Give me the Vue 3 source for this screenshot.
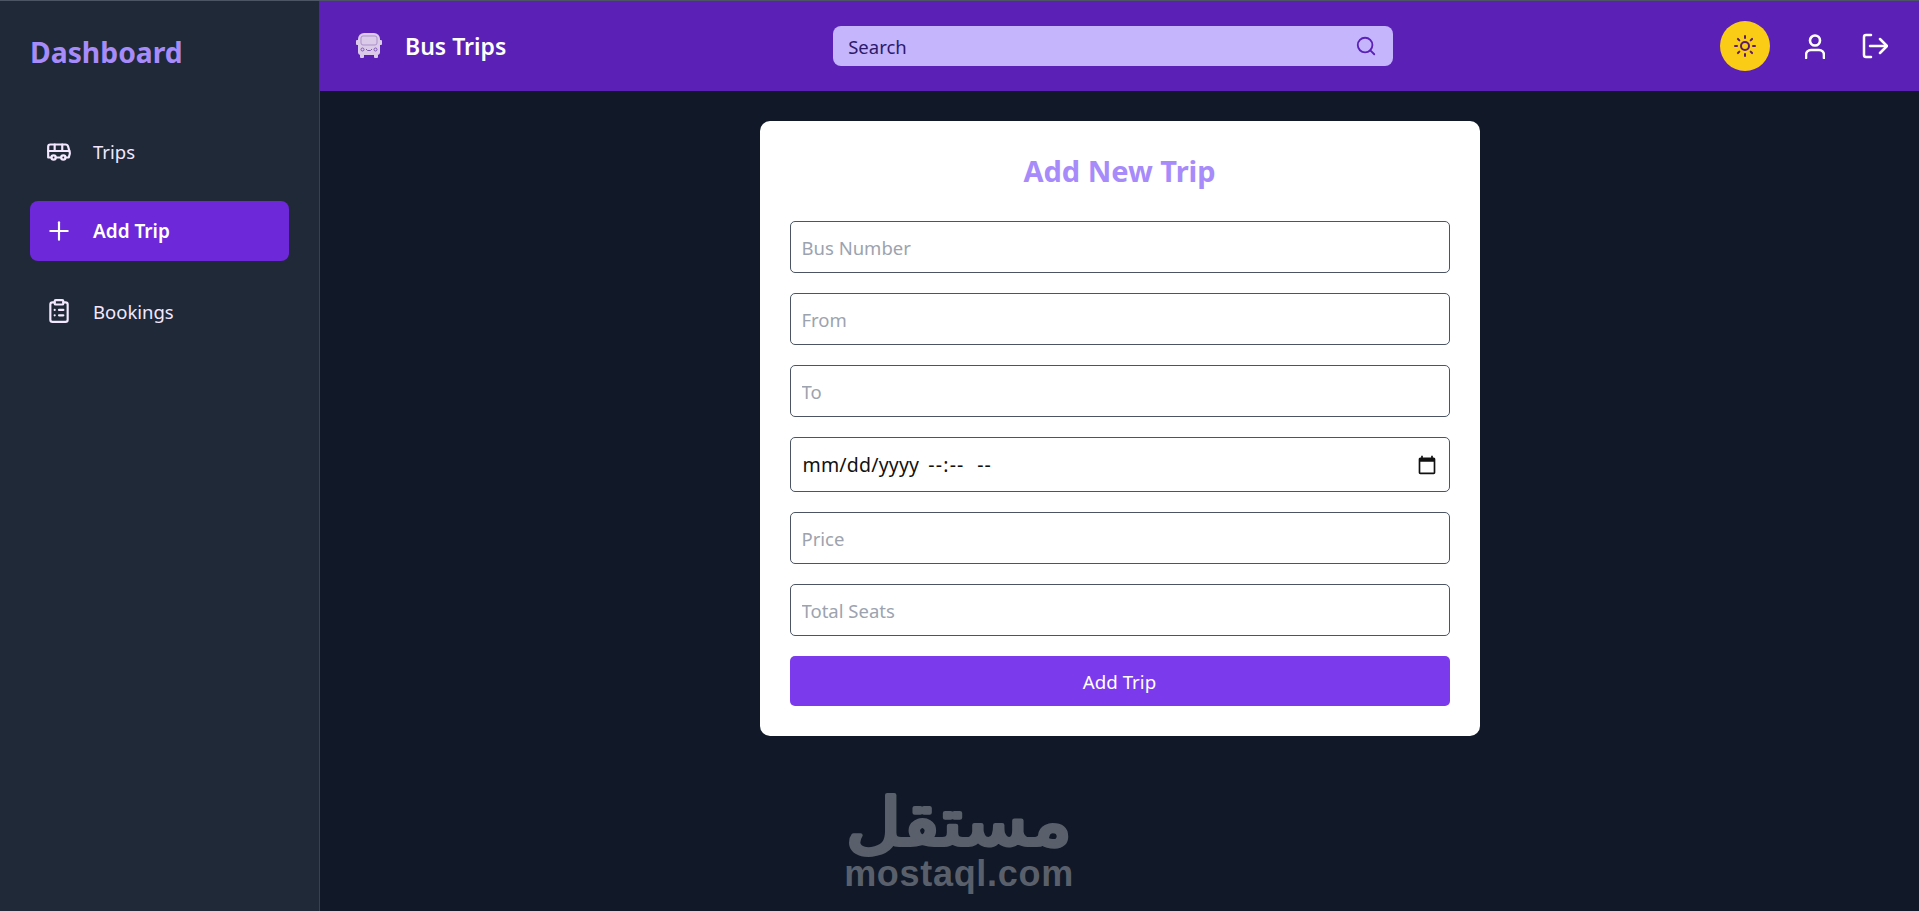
<template>
  <div class="app">
    <aside class="sidebar">
      <h1 class="brand">Dashboard</h1>
      <nav class="menu">
        <a v-for="item in menu" :key="item.label" class="menu-item" :class="{ active: item.active }">
          <svg v-if="item.icon === 'bus'" class="menu-icon" viewBox="0 0 24 24" fill="none" stroke="currentColor" stroke-width="2" stroke-linecap="round" stroke-linejoin="round">
            <path d="M8 6v6" /><path d="M15 6v6" /><path d="M2 12h19.6" />
            <path d="M18 18h3s.5-1.7.8-2.8c.1-.4.2-.8.2-1.2 0-.4-.1-.8-.2-1.2l-1.4-5C20.1 6.8 19.1 6 18 6H4a2 2 0 0 0-2 2v10h3" />
            <circle cx="7" cy="18" r="2" /><path d="M9 18h5" /><circle cx="16" cy="18" r="2" />
          </svg>
          <svg v-else-if="item.icon === 'plus'" class="menu-icon" viewBox="0 0 24 24" fill="none" stroke="currentColor" stroke-width="2" stroke-linecap="round">
            <path d="M12 4v16" /><path d="M4 12h16" />
          </svg>
          <svg v-else class="menu-icon" viewBox="0 0 24 24" fill="none" stroke="currentColor" stroke-width="2" stroke-linecap="round" stroke-linejoin="round">
            <rect x="8" y="2" width="8" height="4" rx="1" />
            <path d="M16 4h2a2 2 0 0 1 2 2v14a2 2 0 0 1-2 2H6a2 2 0 0 1-2-2V6a2 2 0 0 1 2-2h2" />
            <path d="M12 11h4" /><path d="M12 16h4" /><path d="M8 11h.01" /><path d="M8 16h.01" />
          </svg>
          <span>{{ item.label }}</span>
        </a>
      </nav>
    </aside>

    <div class="content">
      <header class="topbar">
        <div class="title-group">
          <svg class="title-icon" viewBox="0 0 26 25">
            <path fill="#dccbe8" d="M8 0h10a6 6 0 0 1 6 6v13a3 3 0 0 1-3 3H5a3 3 0 0 1-3-3V6a6 6 0 0 1 6-6z" />
            <rect fill="#dccbe8" x="0" y="7" width="3" height="5" rx="1" />
            <rect fill="#dccbe8" x="23" y="7" width="3" height="5" rx="1" />
            <rect fill="#dccbe8" x="4" y="21" width="4" height="4" rx="1" />
            <rect fill="#dccbe8" x="18" y="21" width="4" height="4" rx="1" />
            <rect x="5" y="3" width="16" height="9" rx="2" fill="none" stroke="#a98fca" stroke-width="1" />
            <circle cx="6.500" cy="16.500" r="1.500" fill="none" stroke="#7d58b2" stroke-width="1" />
            <circle cx="19.500" cy="16.500" r="1.500" fill="none" stroke="#7d58b2" stroke-width="1" />
            <path d="M10 16l1.500 1.500h3L16 16" fill="none" stroke="#7d58b2" stroke-width="1" />
          </svg>
          <span class="title">Bus Trips</span>
        </div>

        <div class="search">
          <input class="search-input" type="text" placeholder="Search" />
          <svg class="search-icon" viewBox="0 0 24 24" fill="none" stroke="currentColor" stroke-width="2" stroke-linecap="round">
            <circle cx="11" cy="11" r="8" /><path d="m21 21-4.300-4.300" />
          </svg>
        </div>

        <div class="actions">
          <button class="theme-button" type="button">
            <svg viewBox="0 0 24 24" fill="none" stroke="currentColor" stroke-width="2" stroke-linecap="round">
              <circle cx="12" cy="12" r="4" />
              <path d="M12 2v2" /><path d="M12 20v2" /><path d="m4.930 4.930 1.410 1.410" /><path d="m17.660 17.660 1.410 1.410" />
              <path d="M2 12h2" /><path d="M20 12h2" /><path d="m6.340 17.660-1.410 1.410" /><path d="m19.070 4.930-1.410 1.410" />
            </svg>
          </button>
          <svg class="user-icon" viewBox="0 0 20 25" fill="none" stroke="currentColor" stroke-width="2.600" stroke-linecap="round">
            <circle cx="10" cy="6.500" r="5" /><path d="M1 24v-3a5 5 0 0 1 5-5h8a5 5 0 0 1 5 5v3" />
          </svg>
          <svg class="logout-icon" viewBox="0 0 26 26" fill="none" stroke="currentColor" stroke-width="2.500" stroke-linecap="round" stroke-linejoin="round">
            <path d="M9 2H4a2 2 0 0 0-2 2v18a2 2 0 0 0 2 2h5" /><path d="M8 13h16" /><path d="m18 6 7 7-7 7" />
          </svg>
        </div>
      </header>

      <main class="page">
        <form class="card" @submit.prevent>
          <h2 class="card-title">Add New Trip</h2>
          <input class="field" type="text" placeholder="Bus Number" />
          <input class="field" type="text" placeholder="From" />
          <input class="field" type="text" placeholder="To" />
          <div class="field date">
            <span>mm/dd/yyyy</span>
            <span class="date-time">--:--&nbsp;&nbsp;--</span>
            <svg class="calendar" viewBox="0 0 24 24" fill="currentColor">
              <path d="M20 3h-1V1h-2v2H7V1H5v2H4c-1.100 0-2 .9-2 2v16c0 1.100.9 2 2 2h16c1.100 0 2-.9 2-2V5c0-1.100-.9-2-2-2zm0 18H4V8h16v13z" />
            </svg>
          </div>
          <input class="field" type="number" placeholder="Price" />
          <input class="field" type="number" placeholder="Total Seats" />
          <button class="submit" type="submit">Add Trip</button>
        </form>
      </main>
    </div>

    <div class="watermark">
      <svg class="mark-ar" viewBox="0 0 230 72">
        <text x="2" y="64" textLength="226" lengthAdjust="spacingAndGlyphs">مستقل</text>
      </svg>
      <span class="mark-en">mostaql.com</span>
    </div>
  </div>
</template>

<script setup>
const menu = [
  { label: "Trips", icon: "bus" },
  { label: "Add Trip", icon: "plus", active: true },
  { label: "Bookings", icon: "list" }
];
</script>

<style>
html, body {
  margin: 0;
  background: #111827;
  overflow: hidden;
}
</style>

<style scoped>
.app {
  display: flex;
  height: 911px;
  box-sizing: border-box;
  border-top: 1px solid #4b5563;
  font-family: "Noto Sans", "Open Sans", sans-serif;
  background: #111827;
}

.sidebar {
  width: 320px;
  box-sizing: border-box;
  flex-shrink: 0;
  padding: 31px 30px;
  background: #1f2937;
  border-right: 1px solid #374151;
}

.brand {
  margin: 0 0 49px;
  font-size: 28.300px;
  line-height: 40px;
  font-weight: 700;
  color: #a78bfa;
}

.menu {
  display: flex;
  flex-direction: column;
  gap: 20px;
}

.menu-item {
  display: flex;
  align-items: center;
  gap: 21px;
  height: 60px;
  padding: 0 16px;
  border-radius: 8px;
  font-size: 18.500px;
  color: #f3e8ff;
}

.menu-item.active {
  background: #6d28d9;
  color: #fff;
  font-weight: 600;
  font-size: 19px;
}

.menu-icon {
  width: 26px;
  height: 26px;
  flex-shrink: 0;
}

.content {
  flex: 1;
  min-width: 0;
  display: flex;
  flex-direction: column;
}

.topbar {
  height: 90px;
  box-sizing: border-box;
  flex-shrink: 0;
  display: flex;
  align-items: center;
  justify-content: space-between;
  padding: 0 31px 0 36px;
  background: #5b21b6;
}

.title-group {
  display: flex;
  align-items: center;
  gap: 23px;
}

.title-icon {
  width: 26px;
  height: 25px;
  margin-top: -2px;
}

.title {
  font-size: 23px;
  font-weight: 600;
  color: #fff;
}

.search {
  width: 560px;
  height: 40px;
  box-sizing: border-box;
  display: flex;
  align-items: center;
  padding: 0 16px 0 15px;
  border-radius: 8px;
  background: #c4b5fd;
}

.search-input {
  flex: 1;
  min-width: 0;
  border: none;
  outline: none;
  background: transparent;
  font: inherit;
  font-size: 18.500px;
  color: #1e1b4b;
  padding: 0;
}

.search-input::placeholder {
  color: #2e1a6b;
  opacity: 1;
}

.search-icon {
  width: 22px;
  height: 22px;
  color: #5b21b6;
}

.actions {
  display: flex;
  align-items: center;
}

.theme-button {
  width: 50px;
  height: 50px;
  padding: 13px;
  border: none;
  border-radius: 50%;
  background: #facc15;
  color: #5b1a6e;
  margin-right: 35px;
}

.theme-button svg {
  display: block;
  width: 24px;
  height: 24px;
}

.user-icon {
  width: 20px;
  height: 25px;
  color: #fff;
  margin-right: 37px;
}

.logout-icon {
  width: 26px;
  height: 26px;
  color: #fff;
}

.page {
  display: flex;
  justify-content: center;
  padding-top: 30px;
}

.card {
  width: 720px;
  height: 615px;
  box-sizing: border-box;
  display: flex;
  flex-direction: column;
  gap: 20px;
  padding: 30px;
  border-radius: 10px;
  background: #fff;
}

.card-title {
  margin: 0 0 10px;
  text-align: center;
  font-size: 29px;
  line-height: 40px;
  font-weight: 700;
  color: #a78bfa;
}

.field {
  width: 100%;
  height: 52px;
  box-sizing: border-box;
  padding: 0 11px;
  border: 1px solid #4b5563;
  border-radius: 5px;
  background: #fff;
  font: inherit;
  font-size: 18.500px;
  color: #111;
  outline: none;
}

.field.date {
  height: 55px;
  display: flex;
  align-items: center;
  gap: 9px;
  padding-left: 12px;
  font-size: 19.500px;
  letter-spacing: 0.200px;
}

.date-time {
  flex: 1;
  letter-spacing: 1.200px;
}

.calendar {
  width: 20px;
  height: 20px;
  margin-right: 1px;
  color: #111;
}

.field::placeholder {
  color: #9ca3af;
  opacity: 1;
}

.submit {
  height: 50px;
  border: none;
  border-radius: 5px;
  background: #7c3aed;
  color: #fff;
  font: inherit;
  font-size: 18.700px;
}

.watermark {
  position: absolute;
  left: 844px;
  top: 781px;
  width: 230px;
  display: flex;
  flex-direction: column;
  align-items: center;
  color: #5a606b;
  pointer-events: none;
}

.mark-ar {
  display: block;
  width: 230px;
  height: 72px;
  margin-bottom: 3px;
  overflow: visible;
}

.mark-ar text {
  font-family: "DejaVu Sans", sans-serif;
  font-size: 66px;
  fill: #5a606b;
  stroke: #5a606b;
  stroke-width: 4px;
  stroke-linejoin: round;
}

.mark-en {
  font-family: "Liberation Sans", sans-serif;
  font-size: 36px;
  font-weight: 700;
  line-height: 36px;
  letter-spacing: 0.700px;
}
</style>
